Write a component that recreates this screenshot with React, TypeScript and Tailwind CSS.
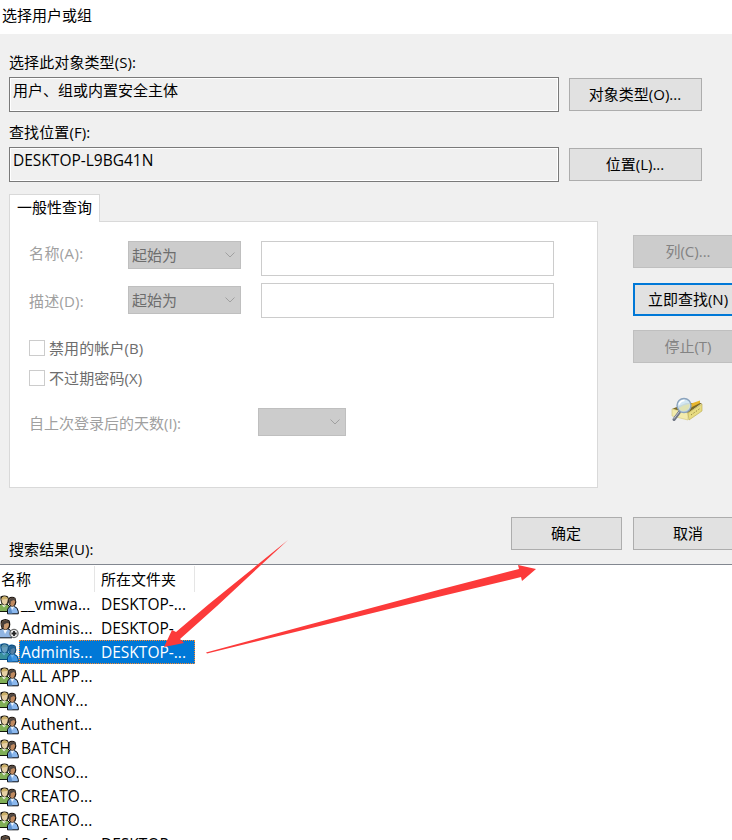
import type { ReactNode } from "react";

type ResultRow = {
  name: string;
  folder?: string;
  icon: "group" | "user";
  selected?: boolean;
};

const RESULTS: ResultRow[] = [
  { name: "__vmwa...", folder: "DESKTOP-...", icon: "group" },
  { name: "Adminis...", folder: "DESKTOP-...", icon: "user" },
  { name: "Adminis...", folder: "DESKTOP-...", icon: "group", selected: true },
  { name: "ALL APP...", icon: "group" },
  { name: "ANONY...", icon: "group" },
  { name: "Authent...", icon: "group" },
  { name: "BATCH", icon: "group" },
  { name: "CONSO...", icon: "group" },
  { name: "CREATO...", icon: "group" },
  { name: "CREATO...", icon: "group" },
  { name: "Defaul...", folder: "DESKTOP-...", icon: "user" },
];

function Button({
  children,
  className = "",
  variant = "normal",
}: {
  children: ReactNode;
  className?: string;
  variant?: "normal" | "default" | "disabled";
}) {
  const variants = {
    normal: "border border-[#adadad] bg-[#e1e1e1]",
    default: "border-2 border-[#0078d7] bg-[#e1e1e1]",
    disabled: "border border-[#bfbfbf] bg-[#cccccc] text-[#838383]",
  };
  return (
    <button
      className={`flex h-[33px] shrink-0 items-center justify-center whitespace-nowrap pr-px pb-0.5 ${variants[variant]} ${className}`}
    >
      {children}
    </button>
  );
}

function ReadOnlyField({ children }: { children: ReactNode }) {
  return (
    <div className="h-[35px] w-[550px] border border-[#7a7a7a]">
      <div className="h-full border border-white pl-0.5 leading-[22px]">
        {children}
      </div>
    </div>
  );
}

function Select({ value, className }: { value?: string; className: string }) {
  return (
    <div
      className={`flex h-7 items-center justify-between border border-[#bfbfbf] bg-[#cccccc] pr-[5px] pl-[3px] text-[#6d6d6d] ${className}`}
    >
      <span>{value}</span>
      <svg width="10" height="6" viewBox="0 0 10 6" fill="none" stroke="#a0a0a0">
        <path d="M0.5 0.5L5 5L9.5 0.5" />
      </svg>
    </div>
  );
}

function Checkbox({ label }: { label: string }) {
  return (
    <label className="flex h-[30px] items-center gap-1 text-[#6d6d6d] tracking-[0.1px]">
      <span className="h-4 w-4 border border-[#cccccc] bg-white" />
      {label}
    </label>
  );
}

function GroupIcon({ selected }: { selected?: boolean }) {
  return (
    <svg width="19" height="20" viewBox="0 0 19 20" className="mt-0.5 shrink-0">
      <path d="M-1 10L2 9H7L10 12V16.5H-1Z" fill="#7fae55" stroke="#11180c" />
      <path d="M1.5 9.5L4 12.5L6.5 9.5Z" fill="#e8eedd" />
      <path d="M0.5 1.5Q4.5 -0.5 8 1.5Q9.5 5 8 8.5Q4.5 12 1.5 8.5Q0 5 0.5 1.5Z" fill="#16120c" />
      <path d="M1.5 4.5Q1.5 1.6 4.5 1.6T7.8 4.5Q7.5 9 4.7 10Q1.7 9 1.5 4.5Z" fill="#e6cfa4" />
      <path d="M1.5 5Q1.5 1.6 4.5 1.6T7.8 4L6 4L3 4.5Z" fill="#cbb069" />
      <path d="M7.5 18.8V15Q7.8 12.3 10.5 11.3H14Q18 12.5 18.3 16.5V18.8Z" fill="#8bb8ee" stroke="#0a0e14" />
      <path d="M8.5 18.5V15Q9 13 10.5 12.5L12.5 18.5Z" fill="#5e8fca" />
      <path d="M10.5 11.3L12.2 15L14.5 11.3Z" fill="#edf4fc" />
      <path d="M8.5 3Q12 0.3 15.5 3Q17 6.5 15.5 10Q12 13 9.2 10Q7.5 6.5 8.5 3Z" fill="#15110e" />
      <path d="M9 6Q9.2 2.8 12.2 2.8T15.2 6.2Q15 10.3 12.3 11.3Q9.2 10.3 9 6Z" fill="#c08a60" />
      <path d="M9 8Q8.8 2.8 12.2 2.8T15.2 6L13.5 5L10.7 6.5V9.5Z" fill="#514842" />
      {selected && (
        <path
          d="M0 1L4 0L8 1L9 2Q12 0 15.5 3Q17 7 15 11L18.5 13.5V19H7V17H0Z"
          fill="#0078d7"
          fillOpacity="0.55"
        />
      )}
    </svg>
  );
}

function UserIcon() {
  return (
    <svg width="19" height="20" viewBox="0 0 19 20" className="mt-0.5 shrink-0">
      <path d="M-1 18.8V12Q0 10 3 9.5H7.5Q11 10.5 12 14.5V18.8Z" fill="#91b5e3" stroke="#0a0e14" />
      <path d="M3 10L5 15L8 10Z" fill="#f2f6fc" />
      <path d="M1 1.5Q5.5 -1.5 9.5 1.5Q11 5 9.5 9Q5.5 13 1.5 9Q0 5 1 1.5Z" fill="#15110e" />
      <path d="M1.5 5Q1.8 1.2 5.4 1.2T9 5Q9 9.2 5.5 10.8Q1.8 9.2 1.5 5Z" fill="#c99a70" />
      <path d="M1.5 7.5Q1.3 1.2 5.4 1.2T9 4.5L7 4L4 5.5V9Z" fill="#4a403a" />
      <circle cx="14" cy="14.5" r="4.1" fill="#f0f0f0" stroke="#6e6e6e" strokeWidth="1.3" />
      <path d="M14 12V17M11.5 14.5H16.5" stroke="#222222" strokeWidth="1.8" />
    </svg>
  );
}

function SearchIcon() {
  return (
    <svg width="33" height="25" viewBox="0 0 33 25">
      <path d="M1 12L15 6L31 6L17 16Z" fill="#7b6a25" />
      <path d="M13 9L29 3.5L29 6L17 12Z" fill="#e9b52b" />
      <path d="M1 12L17 16V23L1 19Z" fill="#f3ebad" stroke="#d4c878" strokeWidth="0.6" />
      <path d="M17 16L31 7V14L18 23Z" fill="#e8dc82" stroke="#b9a94c" strokeWidth="0.6" />
      <path d="M20 18L29 11.5" stroke="#978a45" strokeDasharray="1.5 1.5" />
      <path d="M8.5 15L3 22.5" stroke="#707683" strokeWidth="3" strokeLinecap="round" />
      <path d="M8 15L3 21.5" stroke="#c3c8d1" strokeLinecap="round" />
      <circle cx="13" cy="8.5" r="7" fill="#cfe5f3" fillOpacity="0.9" stroke="#8ba3bd" strokeWidth="1.4" />
      <path d="M8 11Q12 8 18.5 7Q18.5 13 13 14Q8.5 14 8 11Z" fill="#dfe2b4" />
      <path d="M8 7.5Q9.5 3.5 13.5 3.5" stroke="#ffffff" strokeWidth="1.5" fill="none" />
    </svg>
  );
}

function ResultItem({ row }: { row: ResultRow }) {
  return (
    <div className="flex h-6 items-center whitespace-nowrap">
      {row.icon === "group" ? <GroupIcon selected={row.selected} /> : <UserIcon />}
      <div
        className={`flex h-6 w-44 items-center border pl-px text-[15.5px] ${
          row.selected
            ? "border-dotted border-[#ff8728] bg-[#0078d7] text-white"
            : "border-transparent"
        }`}
      >
        <span className="w-20 tracking-[0.1px]">{row.name}</span>
        <span>{row.folder}</span>
      </div>
    </div>
  );
}

export default function App() {
  return (
    <div className="relative flex h-[840px] w-[732px] flex-col overflow-hidden bg-white font-['Open_Sans','Noto_Sans_CJK_SC',sans-serif] text-[15px] leading-5 text-black">
      <header className="h-[34px] shrink-0 pt-[5px] pl-0.5">选择用户或组</header>

      <main className="h-[531px] shrink-0 border-b border-[#828790] bg-[#f0f0f0] pl-[9px]">
        <div className="flex h-[78px] items-end gap-2.5">
          <div>
            <div className="pb-[5px] tracking-[0.1px]">选择此对象类型(S):</div>
            <ReadOnlyField>用户、组或内置安全主体</ReadOnlyField>
          </div>
          <Button className="mb-px w-[133px]">对象类型(O)...</Button>
        </div>
        <div className="flex h-[70px] items-end gap-2.5">
          <div>
            <div className="pb-[5px] tracking-[0.1px]">查找位置(F):</div>
            <ReadOnlyField>
              <span className="text-[15.5px]">DESKTOP-L9BG41N</span>
            </ReadOnlyField>
          </div>
          <Button className="mb-px w-[133px]">位置(L)...</Button>
        </div>

        <div className="flex pt-3">
          <div className="w-[589px] shrink-0">
            <div className="relative z-10 -mb-px h-7 w-[91px] border border-b-0 border-[#d9d9d9] bg-white pt-0.5 pl-[7px]">
              一般性查询
            </div>
            <div className="h-[267px] border border-[#d9d9d9] bg-white pt-[19px] pl-[19px] text-[#a0a0a0]">
              <div className="flex h-[42px] items-start">
                <span className="w-[99px] pt-0.5 tracking-[0.4px]">名称(A):</span>
                <Select value="起始为" className="w-[113px]" />
                <div className="ml-5 h-[35px] w-[293px] border border-[#cccccc]" />
              </div>
              <div className="flex h-[50px] items-start">
                <span className="w-[99px] pt-2 tracking-[0.2px]">描述(D):</span>
                <Select value="起始为" className="mt-[3px] w-[113px]" />
                <div className="ml-5 h-[35px] w-[293px] border border-[#cccccc]" />
              </div>
              <Checkbox label="禁用的帐户(B)" />
              <Checkbox label="不过期密码(X)" />
              <div className="flex items-center pt-[15px]">
                <span className="w-[229px] pt-px">自上次登录后的天数(I):</span>
                <Select className="w-[88px]" />
              </div>
            </div>
          </div>
          <div className="ml-[35px] flex w-[111px] shrink-0 flex-col pt-[41px]">
            <Button variant="disabled">列(C)...</Button>
            <Button variant="default" className="mt-[15px]">立即查找(N)</Button>
            <Button variant="disabled" className="mt-3.5">停止(T)</Button>
            <div className="mt-[34px] pl-[38px]">
              <SearchIcon />
            </div>
          </div>
        </div>

        <div className="flex pt-[29px]">
          <div className="w-[502px] shrink-0 pt-[22px] tracking-[0.1px]">搜索结果(U):</div>
          <Button className="w-[111px]">确定</Button>
          <Button className="ml-[11px] w-[111px]">取消</Button>
        </div>
      </main>

      <section className="pt-px">
        <div className="flex h-[26px]">
          <div className="w-[95px] border-r border-[#e5e5e5] pt-[3px] pl-px">名称</div>
          <div className="w-[100px] border-r border-[#e5e5e5] pt-[3px] pl-1.5">所在文件夹</div>
        </div>
        {RESULTS.map((row, index) => (
          <ResultItem key={index} row={row} />
        ))}
      </section>

      <svg
        className="pointer-events-none absolute inset-0 z-20"
        width="732"
        height="840"
        viewBox="0 0 732 840"
        fill="#fc3a3a"
      >
        <path d="M288 540L209 604L176 632L172 630L164 647L184 643L180 639L217 606Z" />
        <path d="M206 652.5L330 619L440 589.5L519 569L518 565L536 569L522 581L521 577L440 596.5L330 623.5L207 653.5Z" />
      </svg>
    </div>
  );
}
